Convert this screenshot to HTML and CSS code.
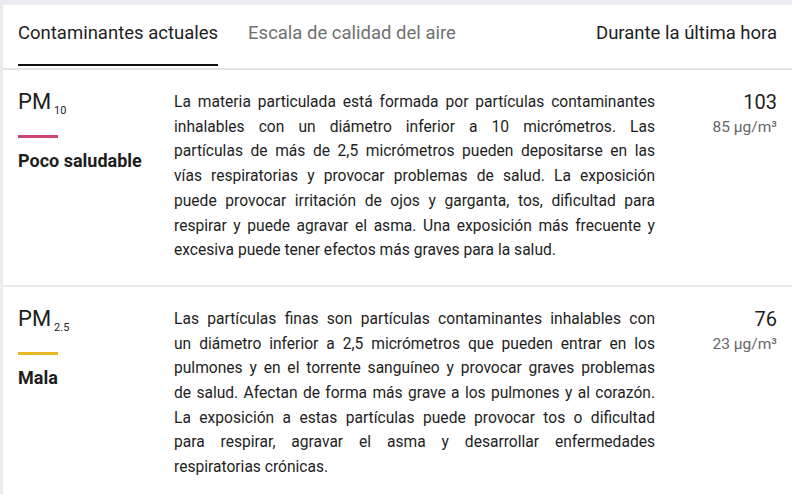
FILE: index.html
```html
<!DOCTYPE html>
<html lang="es">
<head>
<meta charset="utf-8">
<link rel="stylesheet" href="styles.css">
</head>
<body>
<div class="frame">
  <div class="panel">
    <div class="tabs">
      <div class="tab active">Contaminantes actuales</div>
      <div class="tab">Escala de calidad del aire</div>
      <div class="period">Durante la última hora</div>
    </div>
    <div class="row">
      <div class="name">
        <div class="pm">PM<span class="sub">10</span></div>
        <div class="bar pink"></div>
        <div class="level">Poco saludable</div>
      </div>
      <p class="desc">
        <span class="ln">La materia particulada está formada por partículas contaminantes</span>
        <span class="ln">inhalables con un diámetro inferior a 10 micrómetros. Las</span>
        <span class="ln">partículas de más de 2,5 micrómetros pueden depositarse en las</span>
        <span class="ln">vías respiratorias y provocar problemas de salud. La exposición</span>
        <span class="ln">puede provocar irritación de ojos y garganta, tos, dificultad para</span>
        <span class="ln">respirar y puede agravar el asma. Una exposición más frecuente y</span>
        <span class="ln last">excesiva puede tener efectos más graves para la salud.</span>
      </p>
      <div class="value">
        <div class="num">103</div>
        <div class="unit">85 µg/m³</div>
      </div>
    </div>
    <div class="row">
      <div class="name">
        <div class="pm">PM<span class="sub">2.5</span></div>
        <div class="bar yellow"></div>
        <div class="level">Mala</div>
      </div>
      <p class="desc">
        <span class="ln">Las partículas finas son partículas contaminantes inhalables con</span>
        <span class="ln">un diámetro inferior a 2,5 micrómetros que pueden entrar en los</span>
        <span class="ln">pulmones y en el torrente sanguíneo y provocar graves problemas</span>
        <span class="ln">de salud. Afectan de forma más grave a los pulmones y al corazón.</span>
        <span class="ln">La exposición a estas partículas puede provocar tos o dificultad</span>
        <span class="ln">para respirar, agravar el asma y desarrollar enfermedades</span>
        <span class="ln last">respiratorias crónicas.</span>
      </p>
      <div class="value">
        <div class="num">76</div>
        <div class="unit">23 µg/m³</div>
      </div>
    </div>
  </div>
</div>
</body>
</html>
```
FILE: styles.css
```css
* { box-sizing: border-box; }
html, body { margin: 0; padding: 0; }
body {
  width: 792px;
  height: 494px;
  overflow: hidden;
  background: #ebebf2;
  font-family: Roboto, "Noto Sans", sans-serif;
  color: #1e1e1e;
}
.frame {
  padding: 5px 0 0 3px;
  height: 100%;
}
.panel {
  background: #fff;
  height: 100%;
}
.tabs {
  display: flex;
  align-items: flex-start;
  height: 65px;
  padding: 0 15px;
  border-bottom: 2px solid #e4e4e4;
  font-size: 18.5px;
}
.tab {
  padding-top: 17px;
  height: 61px;
  margin-right: 30px;
  color: #707070;
}
.tab.active {
  color: #1e1e1e;
  border-bottom: 2px solid #111;
}
.period {
  margin-left: auto;
  padding-top: 17px;
}
.row {
  display: flex;
  padding: 20px 15px 22px 15px;
  border-bottom: 2px solid #ececec;
}
.name {
  width: 156px;
  flex: none;
}
.pm {
  font-size: 22px;
  line-height: 24px;
  height: 24px;
}
.sub {
  font-size: 11px;
  line-height: 1;
  margin-left: 3px;
  vertical-align: -5px;
}
.bar {
  width: 40px;
  height: 3px;
  margin-top: 21px;
}
.pink { background: #cf4470; }
.yellow { background: #e8b828; }
.level {
  margin-top: 11px;
  font-size: 18px;
  line-height: 24px;
  font-weight: 700;
}
.desc {
  margin: 0;
  width: 481px;
  flex: none;
  font-size: 15.6px;
  line-height: 24.7px;
}
.ln {
  display: block;
  white-space: nowrap;
  text-align: justify;
  text-align-last: justify;
}
.ln.last {
  text-align-last: left;
}
.value {
  flex: 1;
  text-align: right;
}
.num {
  font-size: 20px;
  line-height: 24px;
}
.unit {
  font-size: 15.5px;
  color: #666;
  line-height: 26px;
}
```
